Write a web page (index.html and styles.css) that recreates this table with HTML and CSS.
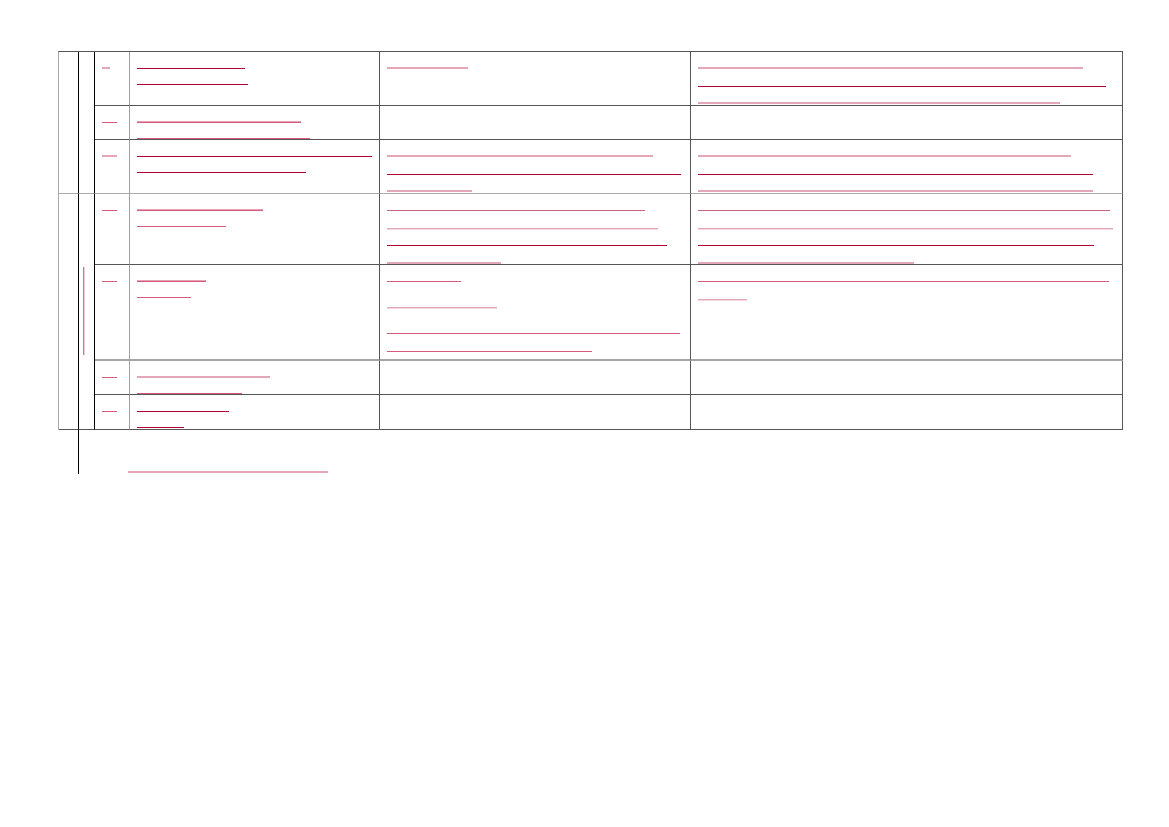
FILE: index.html
```html
<!DOCTYPE html>
<html lang="en">
<head>
<meta charset="utf-8">
<title>Table</title>
<link rel="stylesheet" href="styles.css">
</head>
<body>
<div class="page">
  <div class="grid">
    <div class="cell ca a1"></div>
    <div class="cell cb b1"></div>
    <div class="cell ca a2"></div>
    <div class="cell cb b2"><div class="vbar"></div></div>

    <!-- row 1 -->
    <div class="cell cc"><div class="l"><span class="bar p" style="width:8px"></span></div></div>
    <div class="cell cd">
      <div class="l"><span class="bar c" style="width:108px"></span></div>
      <div class="l"><span class="bar c" style="width:111px"></span></div>
    </div>
    <div class="cell ce ef">
      <div class="l"><span class="bar p" style="width:81px"></span></div>
    </div>
    <div class="cell cf ef">
      <div class="l"><span class="bar p" style="width:385px"></span></div>
      <div class="l"><span class="bar c" style="width:408px"></span></div>
      <div class="l"><span class="bar p" style="width:362px"></span></div>
    </div>

    <!-- row 2 -->
    <div class="cell cc"><div class="l"><span class="bar m" style="width:15px"></span></div></div>
    <div class="cell cd">
      <div class="l"><span class="bar m2" style="width:164px"></span></div>
      <div class="l"><span class="bar m" style="width:173px"></span></div>
    </div>
    <div class="cell ce ef"></div>
    <div class="cell cf ef"></div>

    <!-- row 3 -->
    <div class="cell cc r3"><div class="l"><span class="bar p" style="width:15px"></span></div></div>
    <div class="cell cd r3">
      <div class="l"><span class="bar c" style="width:235px"></span></div>
      <div class="l"><span class="bar c" style="width:169px"></span></div>
    </div>
    <div class="cell ce ef r3">
      <div class="l"><span class="bar p" style="width:266px"></span></div>
      <div class="l"><span class="bar c" style="width:294px"></span></div>
      <div class="l"><span class="bar p" style="width:85px"></span></div>
    </div>
    <div class="cell cf ef r3">
      <div class="l"><span class="bar p" style="width:373px"></span></div>
      <div class="l"><span class="bar c" style="width:395px"></span></div>
      <div class="l"><span class="bar p" style="width:395px"></span></div>
    </div>

    <!-- row 4 -->
    <div class="cell cc"><div class="l"><span class="bar m" style="width:15px"></span></div></div>
    <div class="cell cd">
      <div class="l"><span class="bar m2" style="width:126px"></span></div>
      <div class="l"><span class="bar m" style="width:89px"></span></div>
    </div>
    <div class="cell ce ef">
      <div class="l"><span class="bar d" style="width:258px"></span></div>
      <div class="l"><span class="bar p1" style="width:271px"></span></div>
      <div class="l"><span class="bar c" style="width:280px"></span></div>
      <div class="l"><span class="bar p" style="width:114px"></span></div>
    </div>
    <div class="cell cf ef">
      <div class="l"><span class="bar d" style="width:412px"></span></div>
      <div class="l"><span class="bar p1" style="width:415px"></span></div>
      <div class="l"><span class="bar c" style="width:396px"></span></div>
      <div class="l"><span class="bar p" style="width:216px"></span></div>
    </div>

    <!-- row 5 -->
    <div class="cell cc r5"><div class="l"><span class="bar m" style="width:15px"></span></div></div>
    <div class="cell cd r5">
      <div class="l"><span class="bar m2" style="width:69px"></span></div>
      <div class="l"><span class="bar m" style="width:54px"></span></div>
    </div>
    <div class="cell ce ef r5">
      <div class="para"><div class="l"><span class="bar m" style="width:74px"></span></div></div>
      <div class="para"><div class="l"><span class="bar p1" style="width:110px"></span></div></div>
      <div class="para">
        <div class="l"><span class="bar m" style="width:293px"></span></div>
        <div class="l"><span class="bar m" style="width:205px"></span></div>
      </div>
    </div>
    <div class="cell cf ef r5">
      <div class="para">
        <div class="l"><span class="bar m" style="width:411px"></span></div>
        <div class="l"><span class="bar p1" style="width:49px"></span></div>
      </div>
    </div>

    <!-- row 6 -->
    <div class="cell cc"><div class="l"><span class="bar m" style="width:15px"></span></div></div>
    <div class="cell cd">
      <div class="l"><span class="bar p" style="width:133px"></span></div>
      <div class="l"><span class="bar m" style="width:105px"></span></div>
    </div>
    <div class="cell ce ef"></div>
    <div class="cell cf ef"></div>

    <!-- row 7 -->
    <div class="cell cc"><div class="l"><span class="bar m" style="width:15px"></span></div></div>
    <div class="cell cd">
      <div class="l"><span class="bar c" style="width:92px"></span></div>
      <div class="l"><span class="bar c" style="width:47px"></span></div>
    </div>
    <div class="cell ce ef"></div>
    <div class="cell cf ef"></div>
  </div>

  <div class="below">
    <div class="vline"></div>
    <div class="note"></div>
  </div>
</div>
</body>
</html>
```

FILE: styles.css
```css
html, body {
  margin: 0;
  padding: 0;
  background: #ffffff;
  font-family: "Liberation Sans", Arial, sans-serif;
}

.page {
  padding: 51px 0 0 58px;
}

.grid {
  display: grid;
  width: max-content;
  grid-template-columns: 20px 16px 35px 250px 311px 432px;
  grid-template-rows: 54px 34px 54px 71px 96px 34px 35px;
  border-left: 1px solid #a8a8a8;
  border-top: 1px solid #555555;
}

.cell {
  box-sizing: border-box;
  border-right: 1px solid #555555;
  border-bottom: 1px solid #555555;
  padding: 1px 0 0 7px;
  min-width: 0;
}

.ef {
  padding-top: 0;
}

.ca, .cb {
  padding: 0;
  border-right-color: #000000;
}

.a1 { grid-row: 1 / 4; grid-column: 1; border-bottom-color: #ababab; }
.b1 { grid-row: 1 / 4; grid-column: 2; border-bottom-color: #ababab; }
.a2 { grid-row: 4 / 8; grid-column: 1; }
.b2 { grid-row: 4 / 8; grid-column: 2; padding: 73px 0 0 4px; }

.cc {
  border-right-color: #a0a0a0;
}

.r3 {
  border-bottom-color: #ababab;
}

.r5 {
  border-bottom: 2px solid #a6a6a6;
}

.l {
  height: 16px;
  display: flex;
  align-items: flex-end;
}

.ef .l {
  height: 17.5px;
}

.ef .bar {
  margin-bottom: 0.5px;
}

.para + .para {
  margin-top: 8.5px;
}

.bar {
  display: block;
  height: 1px;
}

.bar.c { background: #b3002d; }
.bar.m { background: #d65b7a; }
.bar.d { background: #c5667c; }
.bar.p { height: 2px; background: #e4a7b6; }
.bar.p1 { height: 1px; background: #e4a7b6; box-shadow: 0 1px 0 #f3d6de; }
.bar.m2 { height: 2px; background: #d65b7a; box-shadow: inset 0 1px 0 #e6a3b4; }

.vbar {
  width: 1px;
  height: 88px;
  background: #d8708a;
  box-shadow: 1px 0 0 #f2cdd7;
}

.below {
  display: flex;
  height: 44px;
  margin-left: 20px;
}

.vline {
  width: 1px;
  height: 44px;
  background: #000000;
}

.note {
  align-self: flex-end;
  margin: 0 0 1px 49px;
  width: 200px;
  height: 2px;
  background: #e4a7b6;
}
```
